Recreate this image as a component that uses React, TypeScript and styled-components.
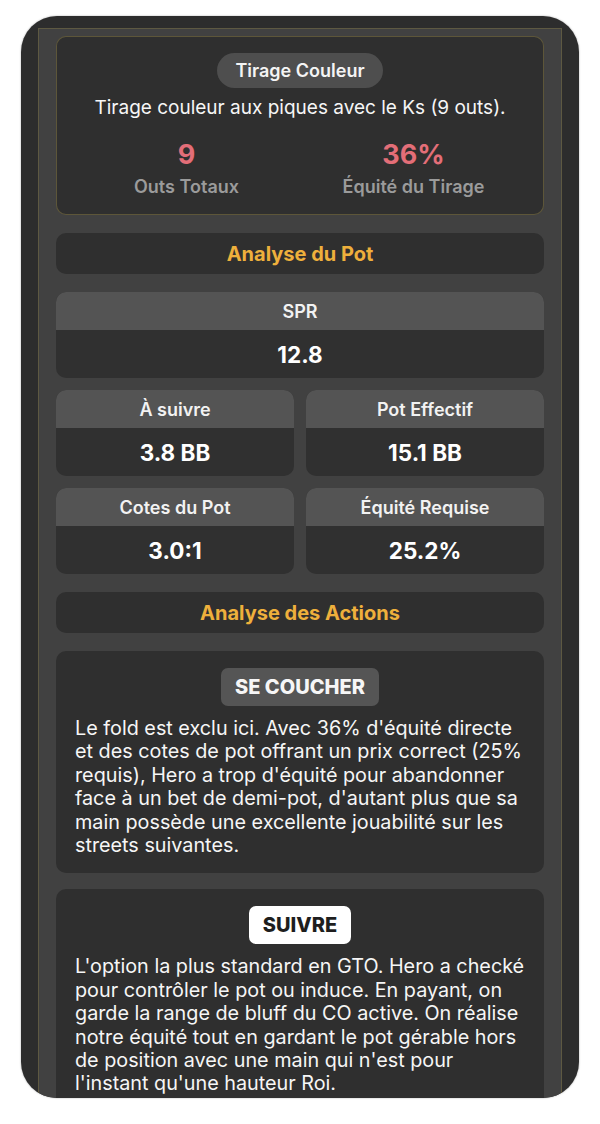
import React from 'react';
import styled, {createGlobalStyle} from 'styled-components';

const GlobalStyle = createGlobalStyle`
  html, body {
    margin: 0;
    padding: 0;
    background: #ffffff;
  }
  body {
    font-family: "Inter", "Noto Sans", sans-serif;
    -webkit-font-smoothing: antialiased;
  }
`

const Page = styled.div`
  width: 600px;
  height: 1124px;
  padding: 16px 21px 26px;
  box-sizing: border-box;
`

const Frame = styled.div`
  height: 100%;
  background: #2d2d2d;
  border-radius: 36px;
  overflow: hidden;
  padding: 12px 17px 0;
  box-sizing: border-box;
  box-shadow: 0 0 2px rgba(0, 0, 0, 0.35);
`

const Column = styled.div`
  height: 100%;
  background: #414141;
  border: 1px solid rgba(150, 135, 70, 0.35);
  border-bottom: none;
  padding: 7px 17px 0;
  box-sizing: border-box;
  display: flex;
  flex-direction: column;
  gap: 18px;

  & > * {
    flex-shrink: 0;
  }
`

const Card = styled.div<{ $outlined?: boolean }>`
  background: #2f2f2f;
  border-radius: 10px;
  border: 1px solid ${p => p.$outlined ? 'rgba(150, 135, 70, 0.45)' : 'transparent'};
  color: #f6f6f6;
`

const DrawCard = styled(Card)`
  padding: 16px 16px 15px;
  display: flex;
  flex-direction: column;
  align-items: center;
`

const Pill = styled.div`
  height: 35px;
  padding: 0 18px;
  border-radius: 18px;
  background: #4e4e4e;
  display: flex;
  align-items: center;
  font-size: 18px;
  font-weight: 600;
  color: #f4f4f4;
`

const Description = styled.div`
  margin-top: 9px;
  font-size: 19px;
  line-height: 22px;
  text-align: center;
`

const DrawStats = styled.div`
  margin-top: 20px;
  width: 100%;
  display: grid;
  grid-template-columns: 1fr 1fr;
`

const DrawStat = styled.div`
  display: flex;
  flex-direction: column;
  align-items: center;
`

const DrawValue = styled.div`
  font-size: 27px;
  line-height: 32px;
  font-weight: 700;
  color: #e36e78;
`

const DrawLabel = styled.div`
  margin-top: 4px;
  font-size: 18px;
  line-height: 24px;
  font-weight: 600;
  color: #9b9b9b;
`

const SectionTitle = styled(Card)`
  height: 41px;
  box-sizing: border-box;
  display: flex;
  align-items: center;
  justify-content: center;
  font-size: 20px;
  font-weight: 700;
  color: #eeb03c;
`

const StatsGrid = styled.div`
  display: grid;
  grid-template-columns: 1fr 1fr;
  gap: 12px;
`

const StatCell = styled.div<{ $wide?: boolean }>`
  grid-column: ${p => p.$wide ? '1 / -1' : 'auto'};
  border-radius: 10px;
  overflow: hidden;
  background: #303030;
`

const StatHead = styled.div`
  height: 38px;
  background: #545454;
  display: flex;
  align-items: center;
  justify-content: center;
  font-size: 18px;
  font-weight: 600;
  color: #f2f2f2;
`

const StatValue = styled.div`
  height: 48px;
  display: flex;
  align-items: center;
  justify-content: center;
  font-size: 22.5px;
  font-weight: 700;
  color: #ffffff;
`

const Actions = styled.div`
  display: flex;
  flex-direction: column;
  gap: 16px;
`

const ActionCard = styled(Card)`
  padding: 16px 18px 15px;
  display: flex;
  flex-direction: column;
  align-items: center;
`

const ActionBadge = styled.div<{ $active?: boolean }>`
  height: 38px;
  padding: 0 14px;
  border-radius: 7px;
  background: ${p => p.$active ? '#ffffff' : '#555555'};
  color: ${p => p.$active ? '#1e1e1e' : '#f6f6f6'};
  display: flex;
  align-items: center;
  font-size: 20px;
  font-weight: 800;
`

const ActionText = styled.p`
  margin: 11px 0 0;
  align-self: stretch;
  font-size: 19.8px;
  line-height: 23.4px;
  color: #f6f6f6;
`

const stats = [
    {label: "À suivre", value: "3.8 BB"},
    {label: "Pot Effectif", value: "15.1 BB"},
    {label: "Cotes du Pot", value: "3.0:1"},
    {label: "Équité Requise", value: "25.2%"},
]

const actions = [
    {
        name: "SE COUCHER",
        active: false,
        text: "Le fold est exclu ici. Avec 36% d'équité directe et des cotes de pot offrant un prix correct (25% requis), Hero a trop d'équité pour abandonner face à un bet de demi-pot, d'autant plus que sa main possède une excellente jouabilité sur les streets suivantes."
    },
    {
        name: "SUIVRE",
        active: true,
        text: "L'option la plus standard en GTO. Hero a checké pour contrôler le pot ou induce. En payant, on garde la range de bluff du CO active. On réalise notre équité tout en gardant le pot gérable hors de position avec une main qui n'est pour l'instant qu'une hauteur Roi."
    },
]

function App() {
    return (
        <Page>
            <GlobalStyle/>
            <Frame>
                <Column>
                    <DrawCard $outlined>
                        <Pill>Tirage Couleur</Pill>
                        <Description>Tirage couleur aux piques avec le Ks (9 outs).</Description>
                        <DrawStats>
                            <DrawStat>
                                <DrawValue>9</DrawValue>
                                <DrawLabel>Outs Totaux</DrawLabel>
                            </DrawStat>
                            <DrawStat>
                                <DrawValue>36%</DrawValue>
                                <DrawLabel>Équité du Tirage</DrawLabel>
                            </DrawStat>
                        </DrawStats>
                    </DrawCard>

                    <SectionTitle>Analyse du Pot</SectionTitle>

                    <StatsGrid>
                        <StatCell $wide>
                            <StatHead>SPR</StatHead>
                            <StatValue>12.8</StatValue>
                        </StatCell>
                        {stats.map(s => (
                            <StatCell key={s.label}>
                                <StatHead>{s.label}</StatHead>
                                <StatValue>{s.value}</StatValue>
                            </StatCell>
                        ))}
                    </StatsGrid>

                    <SectionTitle>Analyse des Actions</SectionTitle>

                    <Actions>
                        {actions.map(a => (
                            <ActionCard key={a.name}>
                                <ActionBadge $active={a.active}>{a.name}</ActionBadge>
                                <ActionText>{a.text}</ActionText>
                            </ActionCard>
                        ))}
                    </Actions>
                </Column>
            </Frame>
        </Page>
    );
}

export default App;
